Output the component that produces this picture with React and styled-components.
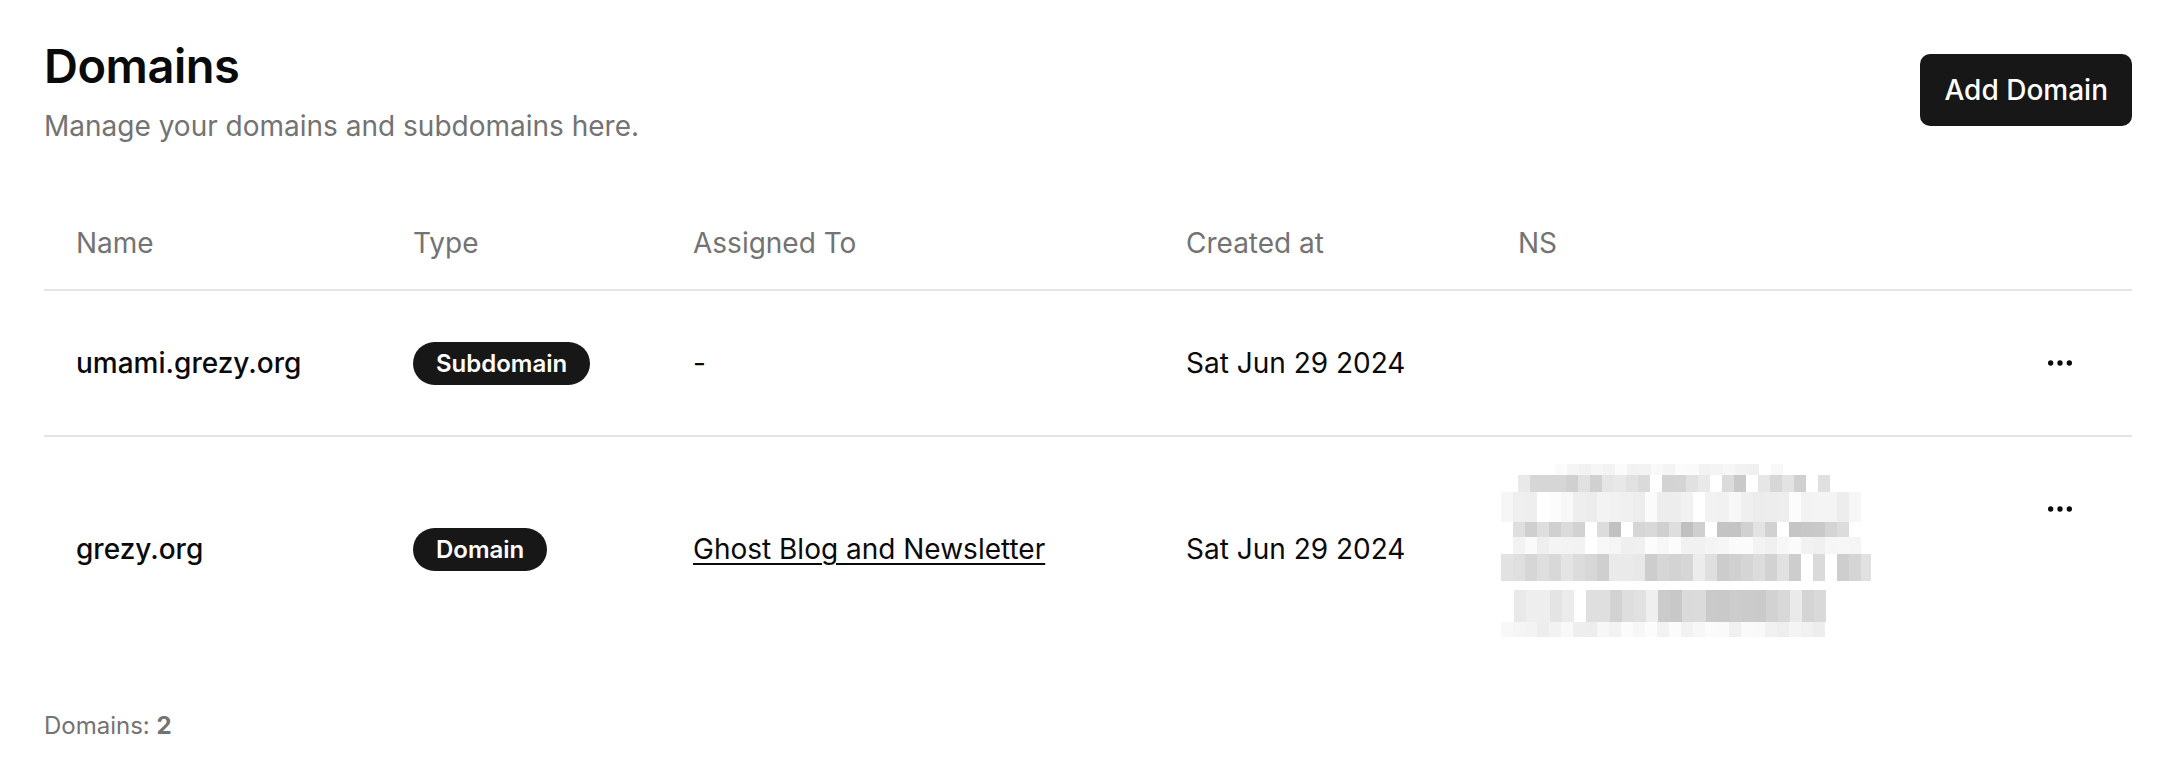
import React from 'react'
import styled, { createGlobalStyle } from 'styled-components'
import { MoreHorizontal } from 'lucide-react'

const GlobalStyle = createGlobalStyle`
    body {
        margin: 0;
        background: #ffffff;
        font-family: Inter, "Noto Sans", sans-serif;
        color: #0a0a0a;
    }
`

const domains = [
    { id: 1, name: 'umami.grezy.org', type: 'Subdomain', assigned: null, created: 'Sat Jun 29 2024', ns: false },
    { id: 2, name: 'grezy.org', type: 'Domain', assigned: 'Ghost Blog and Newsletter', created: 'Sat Jun 29 2024', ns: true },
]

// rows of the redacted nameserver block: [top, height, start x, end x, light, dark]
const mosaicRows = [
    [0, 11, 54, 280, 240, 252],
    [11, 17, 17, 320, 200, 236],
    [28, 30, 0, 350, 236, 252],
    [58, 15, 12, 338, 192, 228],
    [73, 17, 12, 350, 238, 252],
    [90, 27, 0, 364, 204, 238],
    [126, 32, 13, 322, 200, 240],
    [158, 16, 0, 314, 236, 252],
]

function rng(seed) {
    let s = seed
    return () => {
        s = (s * 9301 + 49297) % 233280
        return s / 233280
    }
}

function Mosaic() {
    const rand = rng(17)
    const cells = []
    mosaicRows.forEach(([top, h, x0, x1, lo, hi], r) => {
        for (let x = x0; x < x1; x += 12) {
            const v = rand()
            if (v > 0.92) continue
            const g = Math.round(lo + rand() * (hi - lo))
            cells.push(
                <rect key={r + '-' + x} x={x} y={top + 3} width={12} height={h} fill={`rgb(${g},${g},${g})`} />
            )
        }
    })
    return (
        <MosaicSvg width="370" height="176" viewBox="0 0 370 176">
            {cells}
        </MosaicSvg>
    )
}

export default function App() {
    return (
        <>
            <GlobalStyle />
            <Page>
                <Header>
                    <div>
                        <Title>Domains</Title>
                        <Subtitle>Manage your domains and subdomains here.</Subtitle>
                    </div>
                    <AddButton>Add Domain</AddButton>
                </Header>

                <Table>
                    <HeadRow>
                        <HeadCell first>Name</HeadCell>
                        <HeadCell>Type</HeadCell>
                        <HeadCell>Assigned To</HeadCell>
                        <HeadCell>Created at</HeadCell>
                        <HeadCell>NS</HeadCell>
                        <HeadCell />
                    </HeadRow>
                    {domains.map((d, i) => (
                        <Row key={d.id} last={i === domains.length - 1}>
                            <NameCell first>{d.name}</NameCell>
                            <Cell><Badge>{d.type}</Badge></Cell>
                            <Cell>{d.assigned ? <Link href="#">{d.assigned}</Link> : '-'}</Cell>
                            <Cell>{d.created}</Cell>
                            <Cell>{d.ns && <Mosaic />}</Cell>
                            <ActionCell>
                                <MoreHorizontal size={32} strokeWidth={2} color="#0a0a0a" />
                            </ActionCell>
                        </Row>
                    ))}
                </Table>

                <Footer>Domains: <b>{domains.length}</b></Footer>
            </Page>
        </>
    )
}

const Page = styled.div`
    padding: 38px 42px 40px 44px;
`

const Header = styled.div`
    display: flex;
    justify-content: space-between;
    align-items: flex-start;
`

const Title = styled.h1`
    margin: 0;
    font-size: 47px;
    line-height: 56px;
    font-weight: 600;
    letter-spacing: -0.01em;
    color: #0a0a0a;
`

const Subtitle = styled.p`
    margin: 12px 0 0;
    font-size: 28px;
    line-height: 40px;
    color: #737373;
`

const AddButton = styled.button`
    margin-top: 16px;
    height: 72px;
    padding: 0 24px;
    border: none;
    border-radius: 10px;
    background: #171717;
    color: #ffffff;
    font-family: inherit;
    font-size: 28px;
    font-weight: 500;
    cursor: pointer;
`

const Table = styled.div`
    margin-top: 50px;
`

const columns = '335px 280px 493px 332px 1fr 144px'

const HeadRow = styled.div`
    display: grid;
    grid-template-columns: ${columns};
    height: 93px;
    align-items: center;
    border-bottom: 2px solid #e5e5e5;
`

const HeadCell = styled.div`
    padding-left: ${(p) => (p.first ? '32px' : '34px')};
    font-size: 28px;
    font-weight: 400;
    color: #737373;
`

const Row = styled.div`
    display: grid;
    grid-template-columns: ${columns};
    align-items: center;
    min-height: 95px;
    padding: 24px 0;
    border-bottom: ${(p) => (p.last ? 'none' : '2px solid #e5e5e5')};
`

const Cell = styled.div`
    padding-left: ${(p) => (p.first ? '32px' : '34px')};
    font-size: 28px;
    color: #0a0a0a;
`

const NameCell = styled(Cell)`
    font-weight: 500;
`

const ActionCell = styled.div`
    align-self: start;
    height: 96px;
    display: flex;
    align-items: center;
    justify-content: center;
`

const Badge = styled.span`
    display: inline-flex;
    align-items: center;
    height: 43px;
    padding: 0 23px;
    border-radius: 999px;
    background: #171717;
    color: #ffffff;
    font-size: 24px;
    font-weight: 600;
`

const Link = styled.a`
    color: #0a0a0a;
    text-decoration: underline;
    text-underline-offset: 4px;
    text-decoration-thickness: 2px;
`

const MosaicSvg = styled.svg`
    display: block;
    margin-left: -17px;
`

const Footer = styled.div`
    margin-top: 49px;
    font-size: 24px;
    line-height: 32px;
    color: #737373;

    b {
        font-weight: 700;
    }
`
